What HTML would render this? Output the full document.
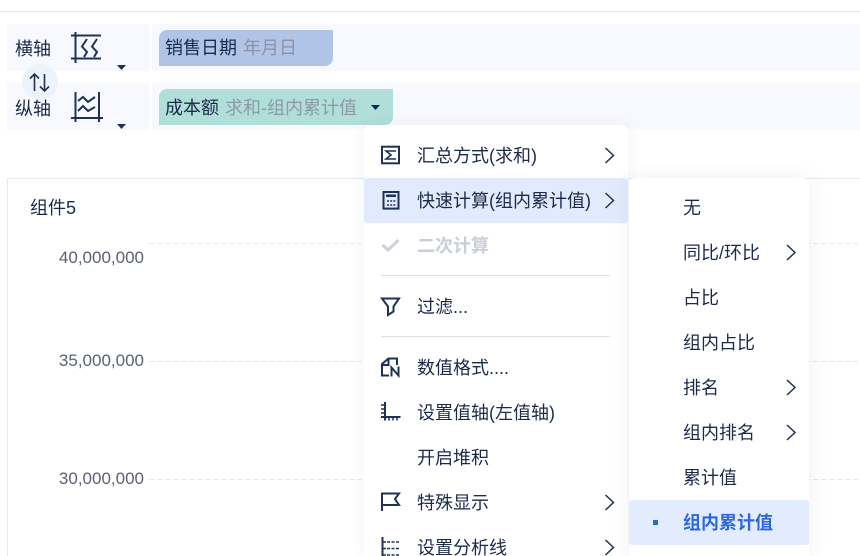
<!DOCTYPE html>
<html lang="zh">
<head>
<meta charset="utf-8">
<style>
html,body{margin:0;padding:0;background:#fff;width:860px;height:556px;overflow:hidden;}
#w{position:relative;width:860px;height:556px;overflow:hidden;font-family:"Liberation Sans","Noto Sans CJK SC",sans-serif;font-size:18px;color:#1c2a4a;}
.a{position:absolute;}
.t{position:absolute;white-space:nowrap;line-height:24px;height:24px;}
.bg{position:absolute;background:#f8f9fe;}
.pill{position:absolute;height:36px;border-radius:8px 0 8px 0;}
.sep{position:absolute;left:381px;width:229px;height:1px;background:#dfe0e8;}
.grid{position:absolute;left:149px;width:711px;height:1px;background:repeating-linear-gradient(90deg,#e6e7ec 0 5px,transparent 5px 8px);}
.yl{position:absolute;left:29px;width:115px;text-align:right;font-size:17px;color:#5a6270;line-height:24px;}
svg{position:absolute;overflow:visible;}
.ic{fill:none;stroke:#1f3154;stroke-width:2;}
.cv{fill:none;stroke:#1f3154;stroke-width:1.500;}
</style>
</head>
<body>
<div id="w">
<div class="a" style="left:0;top:11px;width:860px;height:1px;background:#e8e8ef;"></div>

<div class="bg" style="left:7px;top:24px;width:142px;height:47px;"></div>
<div class="bg" style="left:152px;top:24px;width:708px;height:47px;"></div>
<div class="bg" style="left:7px;top:83px;width:142px;height:47px;"></div>
<div class="bg" style="left:152px;top:83px;width:708px;height:47px;"></div>

<div class="t" style="left:15px;top:37px;">横轴</div>
<div class="t" style="left:15px;top:97px;">纵轴</div>

<svg style="left:0;top:0;" width="150" height="140">
  <circle cx="40" cy="82" r="18" fill="#eef2fb"/>
  <path class="ic" style="stroke-width:1.600" d="M34.500 91V74M30 78.500L34.500 74L39 78.500M44.500 74V91M40 86.500L44.500 91L49 86.500"/>
  <path class="ic" d="M71 35.500H101M71 58.500H101M75.500 32V63"/>
  <path class="ic" d="M87 39L82 46.500L87 52L84 57M97 39L92 46.500L97 52L94 57"/>
  <path fill="#1f3154" d="M117 65H126L121.500 70Z"/>
  <path class="ic" d="M71 118H103M75.500 92V122M99 92V122"/>
  <path class="ic" d="M78 101L83 97L88 102L95 97M78 111L83 106L88 111L95 107"/>
  <path fill="#1f3154" d="M117 124H126L121.500 129Z"/>
</svg>

<div class="pill" style="left:159px;top:30px;width:174px;background:#b0c4e8;"></div>
<div class="t" style="left:165px;top:36px;">销售日期</div>
<div class="t" style="left:243px;top:36px;color:#8c93a8;">年月日</div>

<div class="pill" style="left:159px;top:89px;width:234px;background:#b0dfda;"></div>
<div class="t" style="left:165px;top:96px;">成本额</div>
<div class="t" style="left:225px;top:96px;color:#8c9aa5;">求和-组内累计值</div>
<svg style="left:0;top:0;" width="400" height="130"><path fill="#14234a" d="M371 105H380L375.500 110Z"/></svg>

<!-- chart -->
<div class="a" style="left:7px;top:178px;width:853px;height:378px;border-left:1px solid #e8e8ef;border-top:1px solid #e8e8ef;box-sizing:border-box;"></div>
<div class="t" style="left:30px;top:196px;">组件5</div>
<div class="grid" style="top:243px;"></div>
<div class="grid" style="top:361px;"></div>
<div class="grid" style="top:479px;"></div>
<div class="yl" style="top:246px;">40,000,000</div>
<div class="yl" style="top:349px;">35,000,000</div>
<div class="yl" style="top:467px;">30,000,000</div>

<!-- main menu -->
<div class="a" style="left:364px;top:125px;width:264px;height:431px;background:#fff;border-radius:6px 6px 0 0;box-shadow:0 0 16px rgba(40,50,90,.06);"></div>
<div class="a" style="left:364px;top:178px;width:264px;height:45px;background:#e1ebfd;border-radius:3px;"></div>

<div class="t" style="left:417px;top:144px;">汇总方式(求和)</div>
<div class="t" style="left:417px;top:189px;">快速计算(组内累计值)</div>
<div class="t" style="left:417px;top:234px;color:#c9ced8;font-weight:bold;">二次计算</div>
<div class="sep" style="top:275px;"></div>
<div class="t" style="left:417px;top:295px;">过滤...</div>
<div class="sep" style="top:336px;"></div>
<div class="t" style="left:417px;top:356px;">数值格式....</div>
<div class="t" style="left:417px;top:401px;">设置值轴(左值轴)</div>
<div class="t" style="left:417px;top:446px;">开启堆积</div>
<div class="t" style="left:417px;top:491px;">特殊显示</div>
<div class="t" style="left:417px;top:536px;">设置分析线</div>

<svg style="left:0;top:0;" width="860" height="556">
  <!-- sigma -->
  <rect class="ic" x="382" y="146.700" width="17" height="16.600"/>
  <path class="ic" style="stroke-width:1.600" d="M396 151H386L391 155L386 159H396"/>
  <!-- calculator -->
  <rect class="ic" x="383.500" y="192" width="15" height="16.600"/>
  <path d="M386 194.500H396V197H386Z" fill="#1f3154"/>
  <path stroke="#1f3154" stroke-width="1.400" stroke-dasharray="2 1.200" d="M387 201H396M387 205H396" fill="none"/>
  <!-- check -->
  <path fill="none" stroke="#cdd2da" stroke-width="3" d="M382.500 245L388 250L398.500 240"/>
  <!-- filter -->
  <path class="ic" d="M382 298.500H399L393.500 306.500V311.500L388 315V306.500Z"/>
  <!-- number format -->
  <path class="ic" d="M389 375.500H382V364L388.500 358.500H397V365M388.500 358.500V365H382"/>
  <path stroke="#1f3154" stroke-width="2" fill="none" d="M391.500 376.500V367.500L398.500 375.500V366.500"/>
  <!-- axis -->
  <path class="ic" d="M385 402V420.500M381 417H400.500"/>
  <path stroke="#1f3154" stroke-width="1.500" fill="none" d="M381 405H385M381 409H385M381 413H385M389 417V420.500M393 417V420.500M397 417V420.500"/>
  <!-- flag -->
  <path class="ic" d="M382 511V493.500H399L395 499L399 505H382"/>
  <!-- analysis -->
  <path class="ic" d="M382.500 537V556"/>
  <path stroke="#1f3154" stroke-width="1.500" fill="none" d="M382.500 542H386M382.500 548.500H386M382.500 555H386"/>
  <path stroke="#1f3154" stroke-width="1.500" fill="none" stroke-dasharray="3 1.500" d="M387 542H400M387 548.500H400M387 555H400"/>
  <!-- chevrons -->
  <path class="cv" d="M605.500 148L613.500 155.500L605.500 163"/>
  <path class="cv" d="M605.500 193L613.500 200.500L605.500 208"/>
  <path class="cv" d="M605.500 495L613.500 502.500L605.500 510"/>
  <path class="cv" d="M605.500 540L613.500 547.500L605.500 555"/>
</svg>

<!-- sub menu -->
<div class="a" style="left:629px;top:178px;width:180px;height:378px;background:#fff;border-radius:6px 6px 0 0;box-shadow:0 0 22px rgba(40,50,90,.07);"></div>
<div class="a" style="left:629px;top:500px;width:180px;height:45px;background:#e2ecfe;border-radius:3px;"></div>
<div class="t" style="left:683px;top:196px;">无</div>
<div class="t" style="left:683px;top:241px;">同比/环比</div>
<div class="t" style="left:683px;top:286px;">占比</div>
<div class="t" style="left:683px;top:331px;">组内占比</div>
<div class="t" style="left:683px;top:376px;">排名</div>
<div class="t" style="left:683px;top:421px;">组内排名</div>
<div class="t" style="left:683px;top:466px;">累计值</div>
<div class="t" style="left:683px;top:511px;color:#2f66d8;font-weight:bold;">组内累计值</div>
<svg style="left:0;top:0;" width="860" height="556">
  <path class="cv" d="M787 245L795 252.500L787 260"/>
  <path class="cv" d="M787 380L795 387.500L787 395"/>
  <path class="cv" d="M787 425L795 432.500L787 440"/>
  <rect x="653" y="520" width="5" height="5" fill="#2f66d8"/>
</svg>
</div>
</body>
</html>
